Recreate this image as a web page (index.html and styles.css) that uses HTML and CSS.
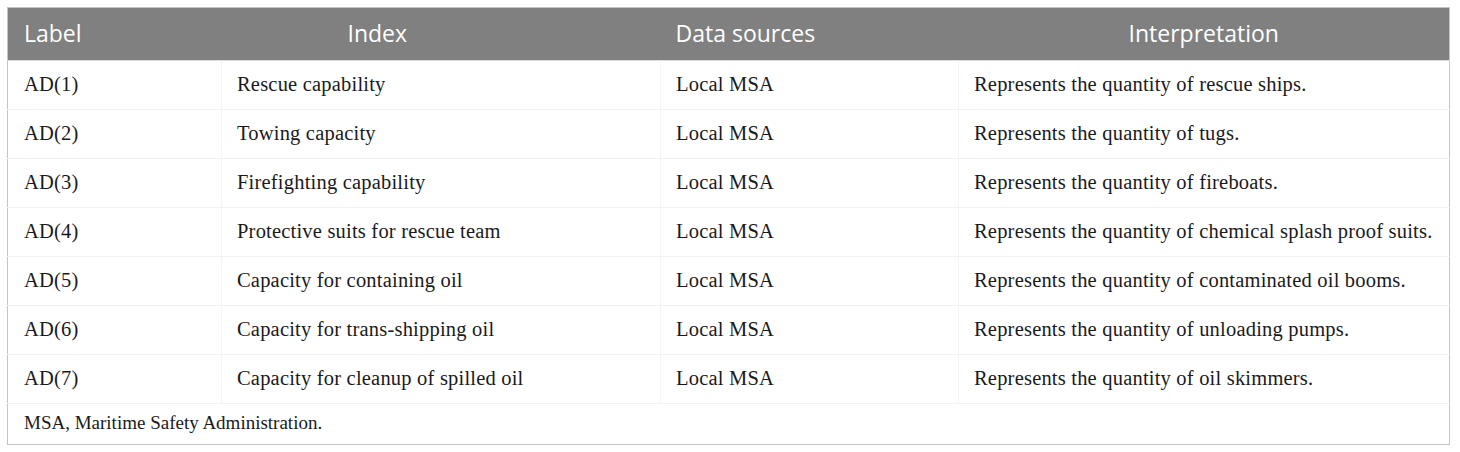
FILE: index.html
```html
<!DOCTYPE html>
<html>
<head>
<meta charset="utf-8">
<link rel="stylesheet" href="styles.css">
</head>
<body>
<div class="wrap">
  <table class="tbl">
    <colgroup>
      <col class="c1"><col class="c2"><col class="c3"><col class="c4">
    </colgroup>
    <thead>
      <tr>
        <th class="h-label">Label</th>
        <th class="h-index">Index</th>
        <th class="h-data">Data sources</th>
        <th class="h-interp">Interpretation</th>
      </tr>
    </thead>
    <tbody>
      <tr><td>AD(1)</td><td>Rescue capability</td><td>Local MSA</td><td>Represents the quantity of rescue ships.</td></tr>
      <tr><td>AD(2)</td><td>Towing capacity</td><td>Local MSA</td><td>Represents the quantity of tugs.</td></tr>
      <tr><td>AD(3)</td><td>Firefighting capability</td><td>Local MSA</td><td>Represents the quantity of fireboats.</td></tr>
      <tr><td>AD(4)</td><td>Protective suits for rescue team</td><td>Local MSA</td><td>Represents the quantity of chemical splash proof suits.</td></tr>
      <tr><td>AD(5)</td><td>Capacity for containing oil</td><td>Local MSA</td><td>Represents the quantity of contaminated oil booms.</td></tr>
      <tr><td>AD(6)</td><td>Capacity for trans-shipping oil</td><td>Local MSA</td><td>Represents the quantity of unloading pumps.</td></tr>
      <tr><td>AD(7)</td><td>Capacity for cleanup of spilled oil</td><td>Local MSA</td><td>Represents the quantity of oil skimmers.</td></tr>
    </tbody>
    <tfoot>
      <tr><td colspan="4" class="foot">MSA, Maritime Safety Administration.</td></tr>
    </tfoot>
  </table>
</div>
</body>
</html>
```
FILE: styles.css
```css
html, body {
  margin: 0;
  padding: 0;
  background: #ffffff;
}
.wrap {
  padding: 7px 0 0 7px;
}
.tbl {
  width: 1443px;
  border-collapse: collapse;
  table-layout: fixed;
  border: 1px solid #c4c4c4;
  font-family: "Liberation Serif", "Times New Roman", serif;
  color: #1a1a1a;
}
.c1 { width: 214px; }
.c2 { width: 439px; }
.c3 { width: 298px; }
.c4 { width: auto; }
thead th {
  background: #7f807f;
  color: #ffffff;
  font-family: "Open Sans", "Noto Sans", sans-serif;
  font-weight: 400;
  font-size: 23px;
  height: 53px;
  padding: 0 0 2px 16px;
  text-align: left;
  border-bottom: 1px solid #dcdcdc;
  box-sizing: border-box;
}
th.h-index { padding-left: 126px; }
th.h-data { padding-left: 15px; }
th.h-interp { text-align: center; padding-left: 0; }
tbody td {
  height: 49px;
  box-sizing: border-box;
  font-size: 20.5px;
  letter-spacing: 0.2px;
  padding: 0 0 2px 15px;
  border-bottom: 1px solid #f2f2f2;
  border-left: 1px solid #f4f4f4;
  vertical-align: middle;
}
tbody td:first-child {
  padding-left: 16px;
  border-left: none;
}
td.foot {
  height: 41px;
  box-sizing: border-box;
  font-size: 19px;
  padding: 0 0 2px 16px;
  vertical-align: middle;
}
```
